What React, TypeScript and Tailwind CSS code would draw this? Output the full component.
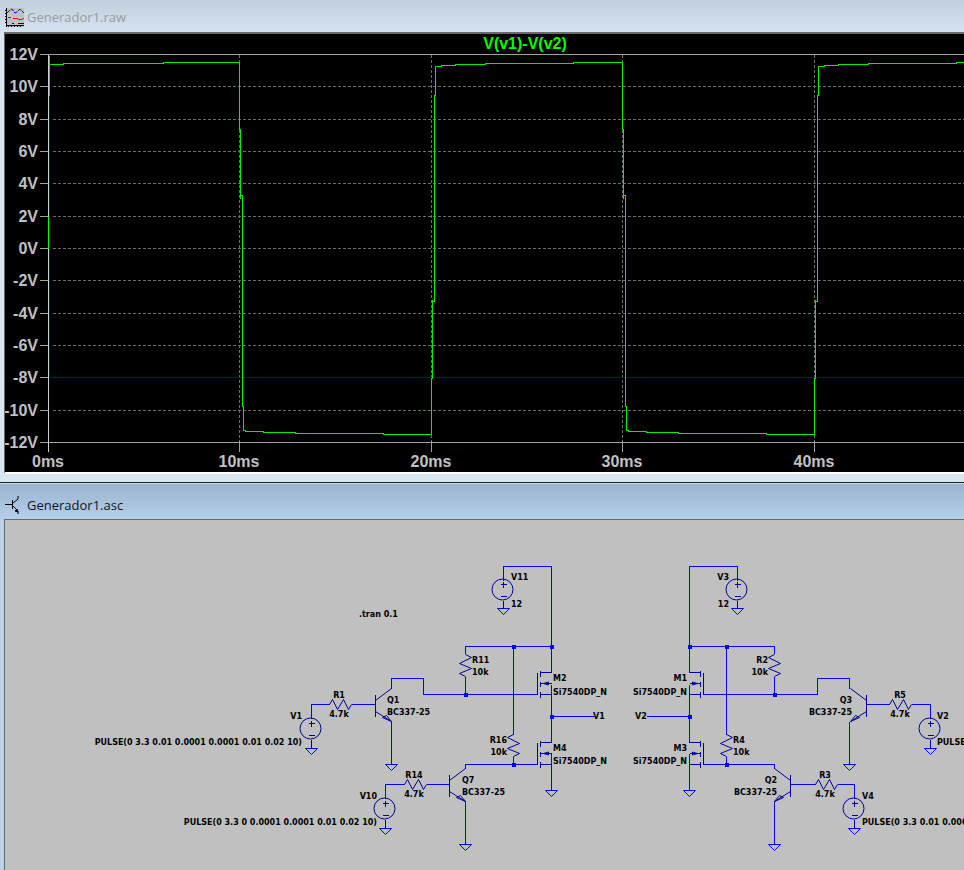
type Anchor = "start" | "middle" | "end";

interface LabelData {
  x: number;
  y: number;
  text: string;
  anchor?: Anchor;
}

const WIRE = "#0000ff";
const PART = "#000096";
const GRID = "#6c6c6c";
const AXIS = "#a0a0a0";

// Plot geometry, in pixels from the plot's top left corner
const AXIS_X = 43;
const TOP_Y = 20;
const BOTTOM_Y = 408;

const VOLTS = [12, 10, 8, 6, 4, 2, 0, -2, -4, -6, -8, -10, -12];
const TIMES = [0, 10, 20, 30, 40];

const voltY = (v: number) => Math.round(TOP_Y + ((12 - v) * (BOTTOM_Y - TOP_Y)) / 24);
const timeX = (ms: number) => Math.round(AXIS_X + ms * 19.14);

// Steps of one period, relative to the falling edge
const PERIOD: [number, number][] = [
  [0, 28], [0, 95], [1, 95], [1, 164], [1, 161], [3, 161], [3, 372], [4, 372],
  [4, 396], [6, 396], [6, 397], [24, 397], [24, 398], [56, 398], [56, 399], [144, 399],
  [144, 400], [192, 400], [192, 344], [193, 344], [193, 265], [193, 267], [195, 267], [195, 61],
  [196, 61], [196, 32], [202, 32], [202, 31], [216, 31], [216, 30], [246, 30], [246, 29],
  [334, 29], [334, 28],
];

const TRACE: [number, number][] = [
  [44, 21], [44, 61], [44, 30], [58, 30], [58, 29], [158, 29], [158, 28],
  ...[0, 1, 2].flatMap((n) =>
    PERIOD.map(([x, y]): [number, number] => [timeX(10 + n * 20) + x, y])
  ),
];

const LABELS: LabelData[] = [
  { x: 359, y: 617, text: ".tran 0.1" },
  { x: 511, y: 580, text: "V11" },
  { x: 511, y: 607, text: "12" },
  { x: 472, y: 663, text: "R11" },
  { x: 472, y: 675, text: "10k" },
  { x: 507, y: 743, text: "R16", anchor: "end" },
  { x: 507, y: 755, text: "10k", anchor: "end" },
  { x: 339, y: 698, text: "R1", anchor: "middle" },
  { x: 339, y: 717, text: "4.7k", anchor: "middle" },
  { x: 387, y: 703, text: "Q1" },
  { x: 387, y: 715, text: "BC337-25" },
  { x: 302, y: 719, text: "V1", anchor: "end" },
  { x: 302, y: 745, text: "PULSE(0 3.3 0.01 0.0001 0.0001 0.01 0.02 10)", anchor: "end" },
  { x: 414, y: 778, text: "R14", anchor: "middle" },
  { x: 414, y: 797, text: "4.7k", anchor: "middle" },
  { x: 462, y: 783, text: "Q7" },
  { x: 462, y: 795, text: "BC337-25" },
  { x: 377, y: 799, text: "V10", anchor: "end" },
  { x: 377, y: 825, text: "PULSE(0 3.3 0 0.0001 0.0001 0.01 0.02 10)", anchor: "end" },
  { x: 553, y: 681, text: "M2" },
  { x: 553, y: 695, text: "Si7540DP_N" },
  { x: 553, y: 751, text: "M4" },
  { x: 553, y: 764, text: "Si7540DP_N" },
  { x: 593, y: 719, text: "V1" },
  { x: 729, y: 580, text: "V3", anchor: "end" },
  { x: 729, y: 607, text: "12", anchor: "end" },
  { x: 768, y: 663, text: "R2", anchor: "end" },
  { x: 768, y: 675, text: "10k", anchor: "end" },
  { x: 733, y: 743, text: "R4" },
  { x: 733, y: 755, text: "10k" },
  { x: 687, y: 681, text: "M1", anchor: "end" },
  { x: 687, y: 695, text: "Si7540DP_N", anchor: "end" },
  { x: 687, y: 751, text: "M3", anchor: "end" },
  { x: 687, y: 764, text: "Si7540DP_N", anchor: "end" },
  { x: 635, y: 719, text: "V2" },
  { x: 852, y: 703, text: "Q3", anchor: "end" },
  { x: 852, y: 715, text: "BC337-25", anchor: "end" },
  { x: 900, y: 698, text: "R5", anchor: "middle" },
  { x: 900, y: 717, text: "4.7k", anchor: "middle" },
  { x: 937, y: 719, text: "V2" },
  { x: 937, y: 745, text: "PULSE(0 3.3 0 0.0001 0.0001 0.01 0.02 10)" },
  { x: 777, y: 783, text: "Q2", anchor: "end" },
  { x: 777, y: 795, text: "BC337-25", anchor: "end" },
  { x: 825, y: 778, text: "R3", anchor: "middle" },
  { x: 825, y: 797, text: "4.7k", anchor: "middle" },
  { x: 862, y: 799, text: "V4" },
  { x: 862, y: 825, text: "PULSE(0 3.3 0.01 0.0001 0.0001 0.01 0.02 10)" },
];

const WIRES = [
  // left half
  "M503 580V566H551V672", "M465 653V646H551", "M513 646V734", "M513 756V764", "M465 676V694",
  "M391 688V678H423V694H537", "M551 684V742", "M551 716H593", "M311 718V704H329", "M351 704H375",
  "M391 721V763", "M385 798V784H404", "M426 784H449", "M465 768V764H537", "M465 801V843",
  "M551 753V790",
  // right half
  "M737 580V566H689V672", "M774 653V646H689", "M726 646V734", "M726 756V764", "M774 676V694",
  "M849 688V678H817V694H702", "M689 684V742", "M689 716H646", "M930 718V704H911", "M889 704H866",
  "M849 721V763", "M854 798V784H837", "M815 784H790", "M774 768V764H702", "M774 801V843",
  "M689 753V790",
];

const JUNCTIONS = [
  [513, 646], [551, 646], [465, 694], [551, 716], [513, 764],
  [689, 646], [726, 646], [774, 694], [689, 716], [726, 764],
];

const GROUNDS = [
  [503, 608], [311, 748], [391, 764], [385, 828], [465, 844], [551, 790],
  [737, 608], [930, 748], [849, 764], [854, 828], [774, 844], [689, 790],
];

function VoltageSource({ x, y }: { x: number; y: number }) {
  return (
    <g stroke={PART} fill="none">
      <circle cx={x - 1} cy={y - 1} r="10.5" />
      <path d={`M${x - 3} ${y - 6}h6M${x} ${y - 9}v6M${x - 3} ${y + 6}h6M${x} ${y + 10}v8`} shapeRendering="crispEdges" />
    </g>
  );
}

function Resistor({ x, y, side = 1 }: { x: number; y: number; side?: number }) {
  const w = 6 * side;
  return (
    <path
      d={`M${x} ${y}l${w} 3l${-2 * w} 6l${2 * w} 5l${-2 * w} 5l${w} 3`}
      stroke={PART}
      fill="none"
    />
  );
}

function FlatResistor({ x, y }: { x: number; y: number }) {
  return <path d={`M${x} ${y}l3 -5l5 10l6 -10l5 10l3 -5`} stroke={PART} fill="none" />;
}

function Transistor({ x, y, side = 1 }: { x: number; y: number; side?: number }) {
  return (
    <g transform={`translate(${x} ${y}) scale(${side} 1)`} stroke={PART} fill="none">
      <path d="M0 -10V12" shapeRendering="crispEdges" />
      <path d="M0 -4L16 -16M0 7L16 17M16 17L11 11L7 13Z" />
    </g>
  );
}

function Mosfet({ x, y, side = 1 }: { x: number; y: number; side?: number }) {
  return (
    <g transform={`translate(${x} ${y}) scale(${side} 1)`} stroke={PART} fill="none">
      <path d="M0 0V22M3 -2V4M3 9V14M3 19V25M3 0H14M3 11H14M3 22H14" shapeRendering="crispEdges" />
      <path d="M6 11L11 9.5V12.5Z" />
    </g>
  );
}

function WaveformIcon() {
  return (
    <svg className="size-5" viewBox="0 0 20 20" aria-hidden="true">
      <rect x="1" y="0" width="18" height="19" fill="#c0c0c0" />
      <path d="M1.5 0v19M1 17.5h18" stroke="#000" fill="none" />
      <path d="M0 2.5h1M0 5.5h1M0 8.5h1M0 11.5h1M0 14.5h1M3.5 18v1M6.5 18v1M9.5 18v1M12.5 18v1M15.5 18v1" stroke="#000" />
      <path d="M2 5l3-3l2-1l3 4l2-1l3-3l2 2l2 2" stroke="#0000ff" strokeDasharray="4 1" fill="none" />
      <path d="M3 9.5h3M8 10.5h4l2 1h3l2-1.5" stroke="#f00000" fill="none" />
      <path d="M7 15.5h2M13 15.5h6" stroke="#000080" fill="none" />
    </svg>
  );
}

function SchematicIcon() {
  return (
    <svg className="size-5" viewBox="0 0 20 20" aria-hidden="true" stroke="#000" fill="none">
      <path d="M0 8.5h7M7.5 4v9" shapeRendering="crispEdges" />
      <path d="M8 7l5-4V0M8 10l5 5v3" />
      <path d="M13 16l-3-1l2-2z" fill="#000" />
    </svg>
  );
}

function Plot() {
  return (
    <svg
      className="block h-[438px] w-full bg-black font-['Liberation_Sans',Arial,sans-serif] text-base font-bold"
      role="img"
      aria-label="V(v1)-V(v2)"
    >
      <g transform="translate(0.5 0.5)" fill="none" shapeRendering="crispEdges">
        {VOLTS.slice(1, -1).map((v) => (
          <line key={v} x1={AXIS_X + 4} x2={4000} y1={voltY(v)} y2={voltY(v)} stroke={GRID} strokeDasharray="3 2" />
        ))}
        {TIMES.slice(1).map((t) => (
          <g key={t}>
            <line x1={timeX(t)} x2={timeX(t)} y1={TOP_Y} y2={BOTTOM_Y} stroke={GRID} strokeDasharray="3 2" />
            <line x1={timeX(t)} x2={timeX(t)} y1={BOTTOM_Y - 2} y2={BOTTOM_Y + 9} stroke={AXIS} />
          </g>
        ))}
        {VOLTS.map((v) => (
          <line key={v} x1={34} x2={AXIS_X} y1={voltY(v)} y2={voltY(v)} stroke={AXIS} />
        ))}
        <path d={`M34 ${TOP_Y}H4000M34 ${BOTTOM_Y}H4000`} stroke={AXIS} />
        <path d={`M${AXIS_X} ${TOP_Y}V${BOTTOM_Y + 9}`} stroke="#d0d0d0" />
        <path d="M44 61V343H4000" stroke="#0000d0" />
        <path d="M43 182V214" stroke="#00ff00" />
        <polyline points={TRACE.map((p) => p.join(",")).join(" ")} stroke="#00f000" />
      </g>
      <text x="520" y="15" textAnchor="middle" fill="#00ff00">
        V(v1)-V(v2)
      </text>
      <g fill="#c0c0c0">
        {VOLTS.map((v) => (
          <text key={v} x="33" y={voltY(v) + 6} textAnchor="end">
            {v}V
          </text>
        ))}
        {TIMES.map((t) => (
          <text key={t} x={timeX(t)} y="433" textAnchor="middle">
            {t}ms
          </text>
        ))}
      </g>
    </svg>
  );
}

function Schematic() {
  return (
    <svg
      className="block min-h-[350px] w-full flex-1 bg-[#c0c0c0] font-['DejaVu_Sans',Verdana,sans-serif] text-[8px] font-bold"
      role="img"
      aria-label="Generador1.asc"
    >
      <g transform="translate(-4.5 -519.5)">
        <path d={WIRES.join("")} stroke={WIRE} fill="none" shapeRendering="crispEdges" />
        {GROUNDS.map(([x, y]) => (
          <path key={`${x}-${y}`} d={`M${x - 6} ${y}h12l-6 6z`} stroke={WIRE} fill="none" />
        ))}
        {JUNCTIONS.map(([x, y]) => (
          <rect key={`${x}-${y}`} x={x - 1.5} y={y - 1.5} width="4" height="4" fill={WIRE} />
        ))}

        <VoltageSource x={503} y={590} />
        <VoltageSource x={311} y={729} />
        <VoltageSource x={385} y={809} />
        <VoltageSource x={737} y={590} />
        <VoltageSource x={930} y={729} />
        <VoltageSource x={854} y={809} />

        <Resistor x={465} y={654} />
        <Resistor x={513} y={734} side={-1} />
        <Resistor x={774} y={654} side={-1} />
        <Resistor x={726} y={734} />
        <FlatResistor x={329} y={704} />
        <FlatResistor x={404} y={784} />
        <FlatResistor x={889} y={704} />
        <FlatResistor x={815} y={784} />

        <Transistor x={375} y={704} />
        <Transistor x={449} y={784} />
        <Transistor x={866} y={704} side={-1} />
        <Transistor x={790} y={784} side={-1} />

        <Mosfet x={537} y={672} />
        <Mosfet x={537} y={742} />
        <Mosfet x={703} y={672} side={-1} />
        <Mosfet x={703} y={742} side={-1} />
      </g>
      <g transform="translate(-5 -520)" fill="#000">
        {LABELS.map((l) => (
          <text key={`${l.x}-${l.y}`} x={l.x} y={l.y} textAnchor={l.anchor}>
            {l.text}
          </text>
        ))}
      </g>
    </svg>
  );
}

export default function App() {
  return (
    <main className="flex min-h-screen flex-col overflow-hidden font-['Open_Sans','Segoe_UI',sans-serif] text-[13px]">
      <section className="border-b border-[#202020] bg-[#d9e5f1] pb-2">
        <header className="flex h-8 items-center gap-0.5 bg-linear-to-b from-[#c1cedb] to-[#d5e2ef] pt-1 pl-[5px]">
          <WaveformIcon />
          <h1 className="text-[#999da2]">Generador1.raw</h1>
        </header>
        <div className="ml-1 border-t-2 border-b-2 border-l border-t-[#696969] border-b-white border-l-[#696969]">
          <Plot />
        </div>
      </section>

      <section className="flex flex-1 flex-col bg-[#b9d1ea]">
        <header className="flex h-9 items-center gap-0.5 border-t border-[#c5d6e8] bg-linear-to-b from-[#99b4d1] to-[#b6cfe9] pt-2 pl-[5px]">
          <SchematicIcon />
          <h2 className="text-[#10151c]">Generador1.asc</h2>
        </header>
        <div className="ml-1 flex flex-1 flex-col border-t border-l border-[#696969]">
          <Schematic />
        </div>
      </section>
    </main>
  );
}
